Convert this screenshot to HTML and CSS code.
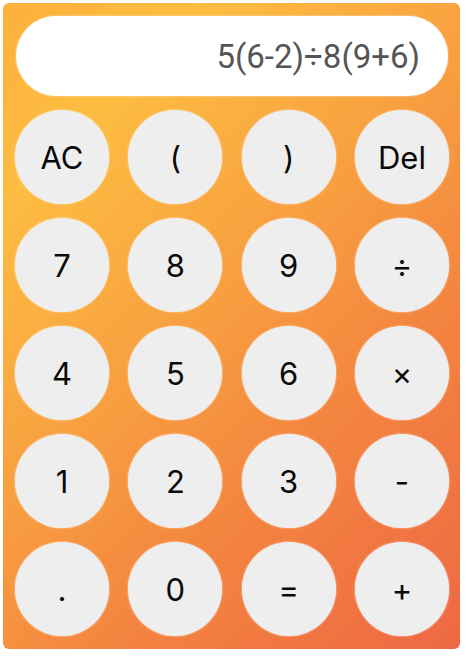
FILE: index.html
```html
<!DOCTYPE html>
<html>
<head>
<meta charset="utf-8">
<link rel="stylesheet" href="styles.css">
</head>
<body>
<div class="calc">
  <div class="display">5(6-2)÷8(9+6)</div>
  <div class="keys">
    <button class="key">AC</button>
    <button class="key">(</button>
    <button class="key">)</button>
    <button class="key">Del</button>
    <button class="key">7</button>
    <button class="key">8</button>
    <button class="key">9</button>
    <button class="key">÷</button>
    <button class="key">4</button>
    <button class="key">5</button>
    <button class="key">6</button>
    <button class="key">×</button>
    <button class="key">1</button>
    <button class="key">2</button>
    <button class="key">3</button>
    <button class="key">-</button>
    <button class="key">.</button>
    <button class="key">0</button>
    <button class="key">=</button>
    <button class="key">+</button>
  </div>
</div>
</body>
</html>
```
FILE: styles.css
```css
html, body {
  margin: 0;
  padding: 0;
  background: #ffffff;
}
body {
  padding: 3px;
}
.calc {
  width: 457px;
  height: 646px;
  box-sizing: border-box;
  padding: 13px 11px 13px 12px;
  border-radius: 6px;
  background: linear-gradient(135deg, #fbb03b 0%, #fdbd41 18%, #f8a040 45%, #f3823f 70%, #ee6844 100%);
  display: flex;
  flex-direction: column;
  gap: 14px;
}
.display {
  height: 81px;
  margin: 0 1px 0 1px;
  background: #ffffff;
  border-radius: 41px;
  display: flex;
  align-items: center;
  justify-content: flex-end;
  padding-right: 28px;
  font-family: Roboto, "Liberation Sans", sans-serif;
  font-size: 33px;
  color: #555555;
  box-shadow: 0 0 2px rgba(255, 255, 255, 0.8);
}
.keys {
  display: grid;
  grid-template-columns: repeat(4, 94px);
  grid-auto-rows: 94px;
  justify-content: space-between;
  row-gap: 14px;
}
.key {
  width: 94px;
  height: 94px;
  border: none;
  border-radius: 50%;
  background: #eeeeee;
  font-family: Inter, "Noto Sans", sans-serif;
  font-size: 31px;
  font-weight: 400;
  color: #0a0a0a;
  padding: 0;
  display: flex;
  align-items: center;
  justify-content: center;
  box-shadow: 0 0 2px rgba(255, 255, 255, 0.9);
}
```
